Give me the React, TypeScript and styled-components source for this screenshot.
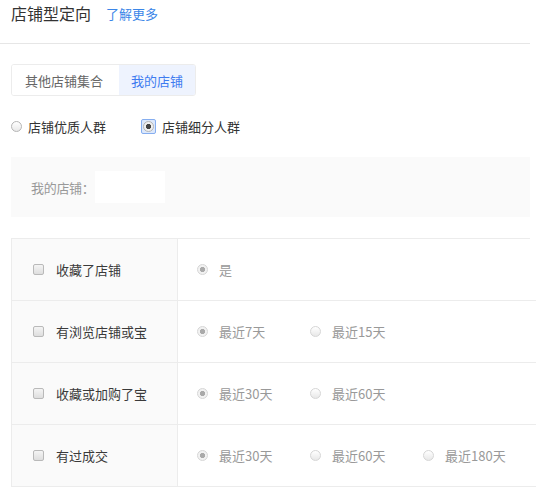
import React from 'react';
import styled, { createGlobalStyle } from 'styled-components';

const GlobalStyle = createGlobalStyle`
  body {
    margin: 0;
    background: #fff;
    font-family: "Noto Sans CJK SC", "Noto Sans", sans-serif;
    font-size: 13px;
    color: #333;
  }
`;

const Page = styled.div`
  width: 530px;
`;

const Header = styled.div`
  height: 43px;
  padding: 0 11px;
  display: flex;
  align-items: flex-start;
  border-bottom: 1px solid #e6e6e6;
`;

const Title = styled.span`
  font-size: 16px;
  line-height: 26px;
  color: #333;
`;

const MoreLink = styled.a`
  margin-left: 15px;
  font-size: 13px;
  line-height: 27px;
  color: #3b86e8;
  text-decoration: none;
`;

const Body = styled.div`
  padding: 20px 0 0 11px;
`;

const Tabs = styled.div`
  display: inline-flex;
  height: 32px;
  border: 1px solid #ececec;
  border-radius: 3px;
  overflow: hidden;
  box-sizing: border-box;
`;

const Tab = styled.div<{ $active?: boolean }>`
  display: flex;
  align-items: center;
  padding: ${(p) => (p.$active ? '0 12px' : '0 16px 0 13px')};
  font-size: 13px;
  color: ${(p) => (p.$active ? '#3e7cf0' : '#666')};
  background: ${(p) => (p.$active ? '#eef3fe' : '#fff')};
`;

const ScopeRow = styled.div`
  display: flex;
  align-items: center;
  height: 20px;
  margin-top: 20px;
`;

const ScopeOption = styled.label`
  display: flex;
  align-items: center;
  width: 130px;
  color: #333;
  font-size: 13px;
`;

const RadioDot = styled.span<{ $checked?: boolean; $muted?: boolean }>`
  width: 11px;
  height: 11px;
  border-radius: 50%;
  box-sizing: border-box;
  flex: none;
  border: 1px solid ${(p) => (p.$muted ? '#d6d6d6' : '#b5b5b5')};
  background: ${(p) =>
    p.$checked
      ? `radial-gradient(circle, ${p.$muted ? '#aaa' : '#444'} 0 2.4px, ${p.$muted ? '#f2f2f2' : '#f0f0f0'} 2.9px)`
      : 'linear-gradient(#fff, #e8e8e8)'};
`;

const FocusRing = styled.span`
  display: flex;
  align-items: center;
  justify-content: center;
  width: 15px;
  height: 15px;
  box-sizing: border-box;
  border: 1px solid #86aef0;
  border-radius: 2px;
  background: #dce8fb;
  flex: none;
`;

const ScopeText = styled.span`
  margin-left: 6px;
`;

const ShopBox = styled.div`
  margin-top: 21px;
  height: 60px;
  padding: 0 0 0 20px;
  background: #fafafa;
  display: flex;
  align-items: center;
  box-sizing: border-box;
`;

const ShopLabel = styled.span`
  color: #999;
  font-size: 13px;
  letter-spacing: -0.3px;
`;

const ShopInput = styled.div`
  width: 70px;
  height: 32px;
  background: #fff;
`;

const Table = styled.div`
  margin-top: 21px;
  display: grid;
  grid-template-columns: 166px 1fr;
  border-top: 1px solid #ececec;
  border-left: 1px solid #ececec;
`;

const LabelCell = styled.div`
  height: 61px;
  display: flex;
  align-items: center;
  padding-left: 21px;
  background: #fafafa;
  border-right: 1px solid #ececec;
  border-bottom: 1px solid #ececec;
`;

const CheckBox = styled.span`
  width: 11px;
  height: 11px;
  flex: none;
  box-sizing: border-box;
  border: 1px solid #b9b9b9;
  border-radius: 2px;
  background: linear-gradient(#f4f4f4, #dedede);
`;

const LabelText = styled.span`
  margin-left: 12px;
  color: #3a3a3a;
  font-size: 13px;
`;

const OptionCell = styled.div`
  height: 61px;
  display: flex;
  align-items: center;
  padding-left: 19px;
  border-bottom: 1px solid #ececec;
`;

const Option = styled.span`
  display: flex;
  align-items: center;
  width: 113px;
`;

const OptionText = styled.span`
  margin-left: 11px;
  color: #999;
  font-size: 13px;
`;

const rows = [
  { label: '收藏了店铺', options: ['是'] },
  { label: '有浏览店铺或宝', options: ['最近7天', '最近15天'] },
  { label: '收藏或加购了宝', options: ['最近30天', '最近60天'] },
  { label: '有过成交', options: ['最近30天', '最近60天', '最近180天'] },
];

const App: React.FC = () => (
  <Page>
    <GlobalStyle />
    <Header>
      <Title>店铺型定向</Title>
      <MoreLink href="#">了解更多</MoreLink>
    </Header>
    <Body>
      <Tabs>
        <Tab>其他店铺集合</Tab>
        <Tab $active>我的店铺</Tab>
      </Tabs>
      <ScopeRow>
        <ScopeOption>
          <RadioDot />
          <ScopeText>店铺优质人群</ScopeText>
        </ScopeOption>
        <ScopeOption>
          <FocusRing>
            <RadioDot $checked />
          </FocusRing>
          <ScopeText>店铺细分人群</ScopeText>
        </ScopeOption>
      </ScopeRow>
      <ShopBox>
        <ShopLabel>我的店铺：</ShopLabel>
        <ShopInput />
      </ShopBox>
      <Table>
        {rows.map((row) => (
          <React.Fragment key={row.label}>
            <LabelCell>
              <CheckBox />
              <LabelText>{row.label}</LabelText>
            </LabelCell>
            <OptionCell>
              {row.options.map((opt, i) => (
                <Option key={opt}>
                  <RadioDot $muted $checked={i === 0} />
                  <OptionText>{opt}</OptionText>
                </Option>
              ))}
            </OptionCell>
          </React.Fragment>
        ))}
      </Table>
    </Body>
  </Page>
);

export default App;
